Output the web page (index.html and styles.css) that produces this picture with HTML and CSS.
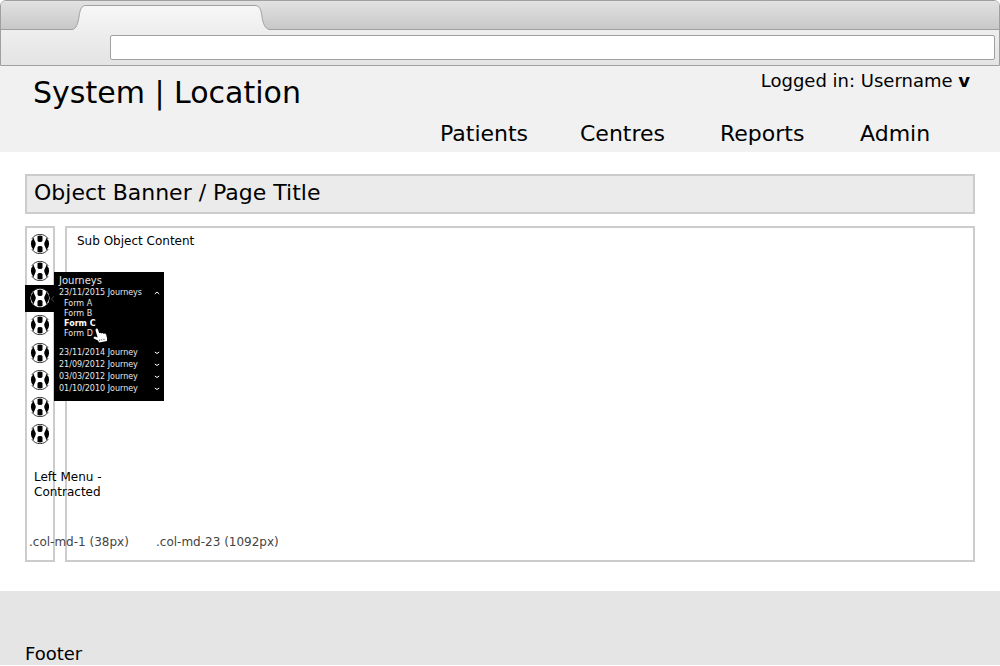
FILE: index.html
```html
<!DOCTYPE html>
<html lang="en">
<head>
<meta charset="utf-8">
<title>System | Location</title>
<link rel="stylesheet" href="styles.css">
</head>
<body>
<svg class="defs" aria-hidden="true">
  <symbol id="emblem" viewBox="0 0 20 20">
    <circle cx="10" cy="10" r="9.6" fill="#fff"/>
    <path d="M1.800 5A9.500 9.500 0 0 1 18.200 5M1.800 15A9.500 9.500 0 0 0 18.200 15" fill="none" stroke="#222" stroke-width=".9"/>
    <path d="M7.500 2Q10 1.200 12.500 2V6.800Q12.200 8 10 8Q7.800 8 7.500 6.800ZM7.500 18Q10 18.800 12.500 18V13.200Q12.200 12 10 12Q7.800 12 7.500 13.200Z"/>
    <path d="M3.800 3.800C4 7 5.800 8 5.800 10S4 13 3.800 16.200Q.9 13.600 .9 10T3.800 3.800ZM16.200 3.800C16 7 14.200 8 14.200 10S16 13 16.200 16.200Q19.100 13.600 19.100 10T16.200 3.800Z"/>
  </symbol>
</svg>

<div class="chrome">
  <div class="tab-strip">
    <svg class="tab" viewBox="0 0 198 26" aria-hidden="true">
      <defs>
        <linearGradient id="tab-fill" x1="0" y1="0" x2="0" y2="1">
          <stop offset="0" stop-color="#f7f7f7"/>
          <stop offset="1" stop-color="#eee"/>
        </linearGradient>
      </defs>
      <path d="M0 24.500C4 24.500 6 18 7 12C8 5 9 .5 14 .5H183C188 .5 189 5 190 12C191 18 193 24.500 198 24.500V26H0Z" fill="url(#tab-fill)"/>
      <path d="M0 24.500C4 24.500 6 18 7 12C8 5 9 .5 14 .5H183C188 .5 189 5 190 12C191 18 193 24.500 198 24.500" fill="none" stroke="#a0a0a0"/>
    </svg>
  </div>
  <div class="toolbar"><input class="address" type="text" aria-label="Address"></div>
</div>

<header class="header">
  <h1 class="brand">System | Location</h1>
  <button class="account" type="button">Logged in: Username <b>v</b></button>
  <nav class="nav">
    <a href="#">Patients</a>
    <a href="#">Centres</a>
    <a href="#">Reports</a>
    <a href="#">Admin</a>
  </nav>
</header>

<main class="main">
  <h2 class="banner">Object Banner / Page Title</h2>
  <div class="columns">
    <aside class="rail">
      <ul class="rail-items">
        <li><button type="button" aria-label="Item 1"><svg><use href="#emblem"/></svg></button></li>
        <li><button type="button" aria-label="Item 2"><svg><use href="#emblem"/></svg></button></li>
        <li class="active">
          <button type="button" aria-label="Journeys"><svg><use href="#emblem"/></svg></button>
          <svg class="pointer" viewBox="0 0 4 8" aria-hidden="true"><path d="M4 0L.5 4L4 8" fill="none" stroke="#444"/></svg>
          <section class="flyout">
            <h3>Journeys</h3>
            <button class="journey" type="button">23/11/2015 Journeys
              <svg viewBox="0 0 6 4" aria-hidden="true"><path d="M.8 3L3 1L5.200 3"/></svg></button>
            <ul class="forms">
              <li><a href="#">Form A</a></li>
              <li><a href="#">Form B</a></li>
              <li><a class="current" href="#">Form C</a></li>
              <li><a href="#">Form D</a></li>
            </ul>
            <button class="journey" type="button">23/11/2014 Journey
              <svg viewBox="0 0 6 4" aria-hidden="true"><path d="M.8 1Q3 4 5.200 1"/></svg></button>
            <button class="journey" type="button">21/09/2012 Journey
              <svg viewBox="0 0 6 4" aria-hidden="true"><path d="M.8 1Q3 4 5.200 1"/></svg></button>
            <button class="journey" type="button">03/03/2012 Journey
              <svg viewBox="0 0 6 4" aria-hidden="true"><path d="M.8 1Q3 4 5.200 1"/></svg></button>
            <button class="journey" type="button">01/10/2010 Journey
              <svg viewBox="0 0 6 4" aria-hidden="true"><path d="M.8 1Q3 4 5.200 1"/></svg></button>
            <svg class="cursor" viewBox="0 0 15 15" aria-hidden="true">
              <path d="M3 .8Q4.200 0 5 1.400L6.200 5.200Q7.400 4.400 8.200 5.400Q9.600 4.600 10.400 5.800Q12.600 5 13.200 6.800L14 10V13L6 14.500L5 12.500L.8 10.600Q0 9 1.800 8.600L4.600 9.600L2.600 2.600Q2.300 1.400 3 .8Z" fill="#fff"/>
              <path d="M6.600 11.600V12.800M8.800 11.200V12.400M11 10.800V12" stroke="#000" stroke-width=".7"/>
            </svg>
          </section>
        </li>
        <li><button type="button" aria-label="Item 4"><svg><use href="#emblem"/></svg></button></li>
        <li><button type="button" aria-label="Item 5"><svg><use href="#emblem"/></svg></button></li>
        <li><button type="button" aria-label="Item 6"><svg><use href="#emblem"/></svg></button></li>
        <li><button type="button" aria-label="Item 7"><svg><use href="#emblem"/></svg></button></li>
        <li><button type="button" aria-label="Item 8"><svg><use href="#emblem"/></svg></button></li>
      </ul>
      <p class="rail-label">Left Menu -<br>Contracted</p>
      <p class="size">.col-md-1 (38px)</p>
    </aside>
    <section class="content">
      <p>Sub Object Content</p>
      <p class="size">.col-md-23 (1092px)</p>
    </section>
  </div>
</main>

<footer class="footer">Footer</footer>
</body>
</html>
```
FILE: styles.css
```css
* { box-sizing: border-box; }

body {
  margin: 0;
  background: #fff;
  color: #000;
  font-family: "DejaVu Sans", sans-serif;
  font-size: 12px;
  line-height: 15px;
}

h1, h2, h3, p, ul { margin: 0; padding: 0; font-weight: normal; }
ul { list-style: none; }
a { color: inherit; text-decoration: none; }
button { margin: 0; padding: 0; border: 0; background: none; color: inherit; font: inherit; cursor: pointer; }
.defs { position: absolute; width: 0; height: 0; }

.chrome {
  border: 1px solid #a0a0a0;
  border-radius: 6px 6px 0 0;
  overflow: hidden;
}
.tab-strip {
  position: relative;
  height: 29px;
  border-bottom: 1px solid #a0a0a0;
  background: linear-gradient(#e2e2e2, #c8c8c8);
}
.tab {
  position: absolute;
  left: 71px;
  bottom: -2px;
  width: 198px;
  height: 26px;
}
.toolbar {
  padding: 5px 4px 5px 109px;
  background: linear-gradient(#eee, #e4e4e4);
}
.address {
  display: block;
  width: 100%;
  height: 25px;
  padding: 0 8px;
  border: 1px solid #a0a0a0;
  border-radius: 2px;
  background: #fff;
  font: inherit;
}

.header {
  display: grid;
  grid-template-columns: 1fr auto;
  align-items: start;
  padding-bottom: 3px;
  background: #f1f1f1;
}
.brand { padding: 9px 0 0 33px; font-size: 30px; line-height: 36px; }
.account { padding: 4px 30px 0 0; font-size: 18px; line-height: 22px; }
.nav {
  grid-column: 1 / -1;
  display: grid;
  grid-template-columns: repeat(4, 140px);
  justify-content: end;
  padding-top: 8px;
  font-size: 22px;
  line-height: 30px;
}

.main { padding: 22px 25px 29px; }
.banner {
  padding: 0 7px 2px;
  border: 2px solid #ccc;
  background: #ebebeb;
  font-size: 22px;
  line-height: 34px;
}
.columns {
  display: grid;
  grid-template-columns: 30px 1fr;
  gap: 10px;
  min-height: 336px;
  margin-top: 12px;
}
.rail, .content {
  display: flex;
  flex-direction: column;
  border: 2px solid #ccc;
  white-space: nowrap;
}
.rail { position: relative; z-index: 1; padding: 2px 0 10px; }
.rail-items {
  display: grid;
  grid-template-rows: repeat(8, 1fr);
  height: 218px;
}
.rail-items > li { display: grid; }
.rail-items > li > button { display: grid; place-items: center; }
.rail-items > li > button svg { width: 20px; height: 20px; }
.active { position: relative; margin: 0 -2px; background: #000; }
.rail-label { padding: 22px 0 0 7px; }
.size { margin-top: auto; color: #444; }
.rail .size { padding-left: 2px; }
.content { padding: 6px 10px 10px; }
.content .size { padding-left: 79px; }

.pointer { position: absolute; right: 0; top: 10px; width: 4px; height: 8px; }
.flyout {
  position: absolute;
  left: 29px;
  top: -13px;
  width: 110px;
  padding: 2px 4px 6px 5px;
  background: #000;
  color: #e6e6e6;
  font-size: 8px;
  line-height: 10px;
}
.flyout h3 { font-size: 10px; line-height: 13px; }
.journey {
  display: flex;
  align-items: center;
  justify-content: space-between;
  width: 100%;
  line-height: 12px;
}
.journey svg { width: 6px; height: 4px; fill: none; stroke: #fff; }
.forms { padding: 0 0 8px 5px; }
.forms .current { color: #fff; font-weight: bold; }
.cursor { position: absolute; left: 39px; top: 56px; width: 15px; height: 15px; }

.footer {
  padding: 52px 25px 0;
  background: #e5e5e5;
  font-size: 18px;
  line-height: 22px;
}
```
